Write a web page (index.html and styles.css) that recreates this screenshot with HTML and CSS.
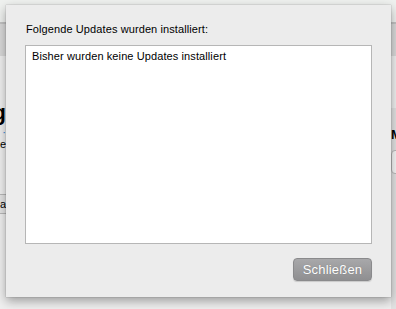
FILE: index.html
```html
<!DOCTYPE html>
<html lang="de">
<head>
<meta charset="utf-8">
<title>Updates</title>
<link rel="stylesheet" href="styles.css">
</head>
<body>
<div class="page">
  <div class="topbar"></div>
  <div class="toolbar"></div>
  <div class="content">
    <div class="side side-left">
      <div class="heading">Einstellung</div>
      <div class="line"><span class="dot">·</span></div>
      <div class="line">Seite</div>
      <div class="field">Auswahl Sprache Deutschland Liste ola</div>
    </div>
    <div class="mid"></div>
    <div class="side side-right">
      <div class="rband"></div>
      <div class="rlabel">M</div>
      <div class="rinput"></div>
    </div>
  </div>
</div>

<div class="dialog">
  <div class="label">Folgende Updates wurden installiert:</div>
  <div class="box">Bisher wurden keine Updates installiert</div>
  <div class="actions">
    <button class="btn">Schließen</button>
  </div>
</div>
</body>
</html>
```

FILE: styles.css
```css
* { box-sizing: border-box; }
html, body {
  margin: 0;
  padding: 0;
}
body {
  width: 396px;
  height: 309px;
  overflow: hidden;
  position: relative;
  background: #eef0ee;
  font-family: "Liberation Sans", Arial, sans-serif;
  font-size: 11px;
  color: #000;
}

/* background page */
.page {
  display: flex;
  flex-direction: column;
  height: 309px;
}
.topbar {
  height: 22px;
  background: #eff1ef;
}
.toolbar {
  height: 34px;
  background: #d9d9d9;
  border-top: 2px solid #c2c2c2;
}
.content {
  flex: 1;
  display: flex;
  background: #efefef;
}
.side {
  overflow: hidden;
  white-space: nowrap;
}
.side-left {
  width: 6px;
  direction: rtl;
  padding-top: 44px;
}
.heading {
  font-size: 22px;
  font-weight: bold;
  line-height: 26px;
}
.line {
  font-size: 11px;
  line-height: 12px;
}
.dot { color: #2a7ad8; }
.field {
  margin-top: 44px;
  height: 20px;
  border-top: 1px solid #b8b8b8;
  border-bottom: 1px solid #b8b8b8;
  background: #e4e4e4;
  line-height: 18px;
  font-size: 11px;
}
.mid { flex: 1; }
.side-right {
  width: 5px;
  background: #e2e2e2;
}
.rband {
  height: 52px;
  background: #efefef;
}
.rlabel {
  font-size: 13px;
  font-weight: bold;
  line-height: 14px;
  margin-top: 20px;
}
.rinput {
  margin-top: 8px;
  height: 24px;
  border: 1px solid #b9b9b9;
  border-radius: 4px;
  background: #f6f6f6;
  width: 12px;
}

/* dialog overlay */
.dialog {
  position: absolute;
  left: 6px;
  top: 5px;
  width: 385px;
  height: 292px;
  background: #ececec;
  box-shadow: 0 4px 10px rgba(0, 0, 0, 0.35), 0 0 1px rgba(0,0,0,0.4);
  padding: 17px 19px 0 19px;
  display: flex;
  flex-direction: column;
  letter-spacing: 0.1px;
}
.label {
  line-height: 14px;
  height: 14px;
  padding-left: 1px;
  margin-bottom: 9px;
}
.box {
  height: 199px;
  width: 347px;
  background: #fff;
  border: 1px solid #b6b6b6;
  padding: 3px 6px;
  line-height: 14px;
}
.actions {
  display: flex;
  justify-content: flex-end;
  padding-top: 14px;
  width: 347px;
}
.btn {
  width: 79px;
  height: 23px;
  border: 1px solid #8a8a8c;
  border-radius: 4px;
  background: linear-gradient(#a8a8aa, #8f8f91);
  box-shadow: 0 1px 1px rgba(0,0,0,0.15);
  color: #fff;
  font-family: "Liberation Sans", Arial, sans-serif;
  font-size: 13px;
  line-height: 21px;
  padding: 0;
  letter-spacing: 0.2px;
  text-shadow: 0 0 1px rgba(0,0,0,0.25);
}
```
